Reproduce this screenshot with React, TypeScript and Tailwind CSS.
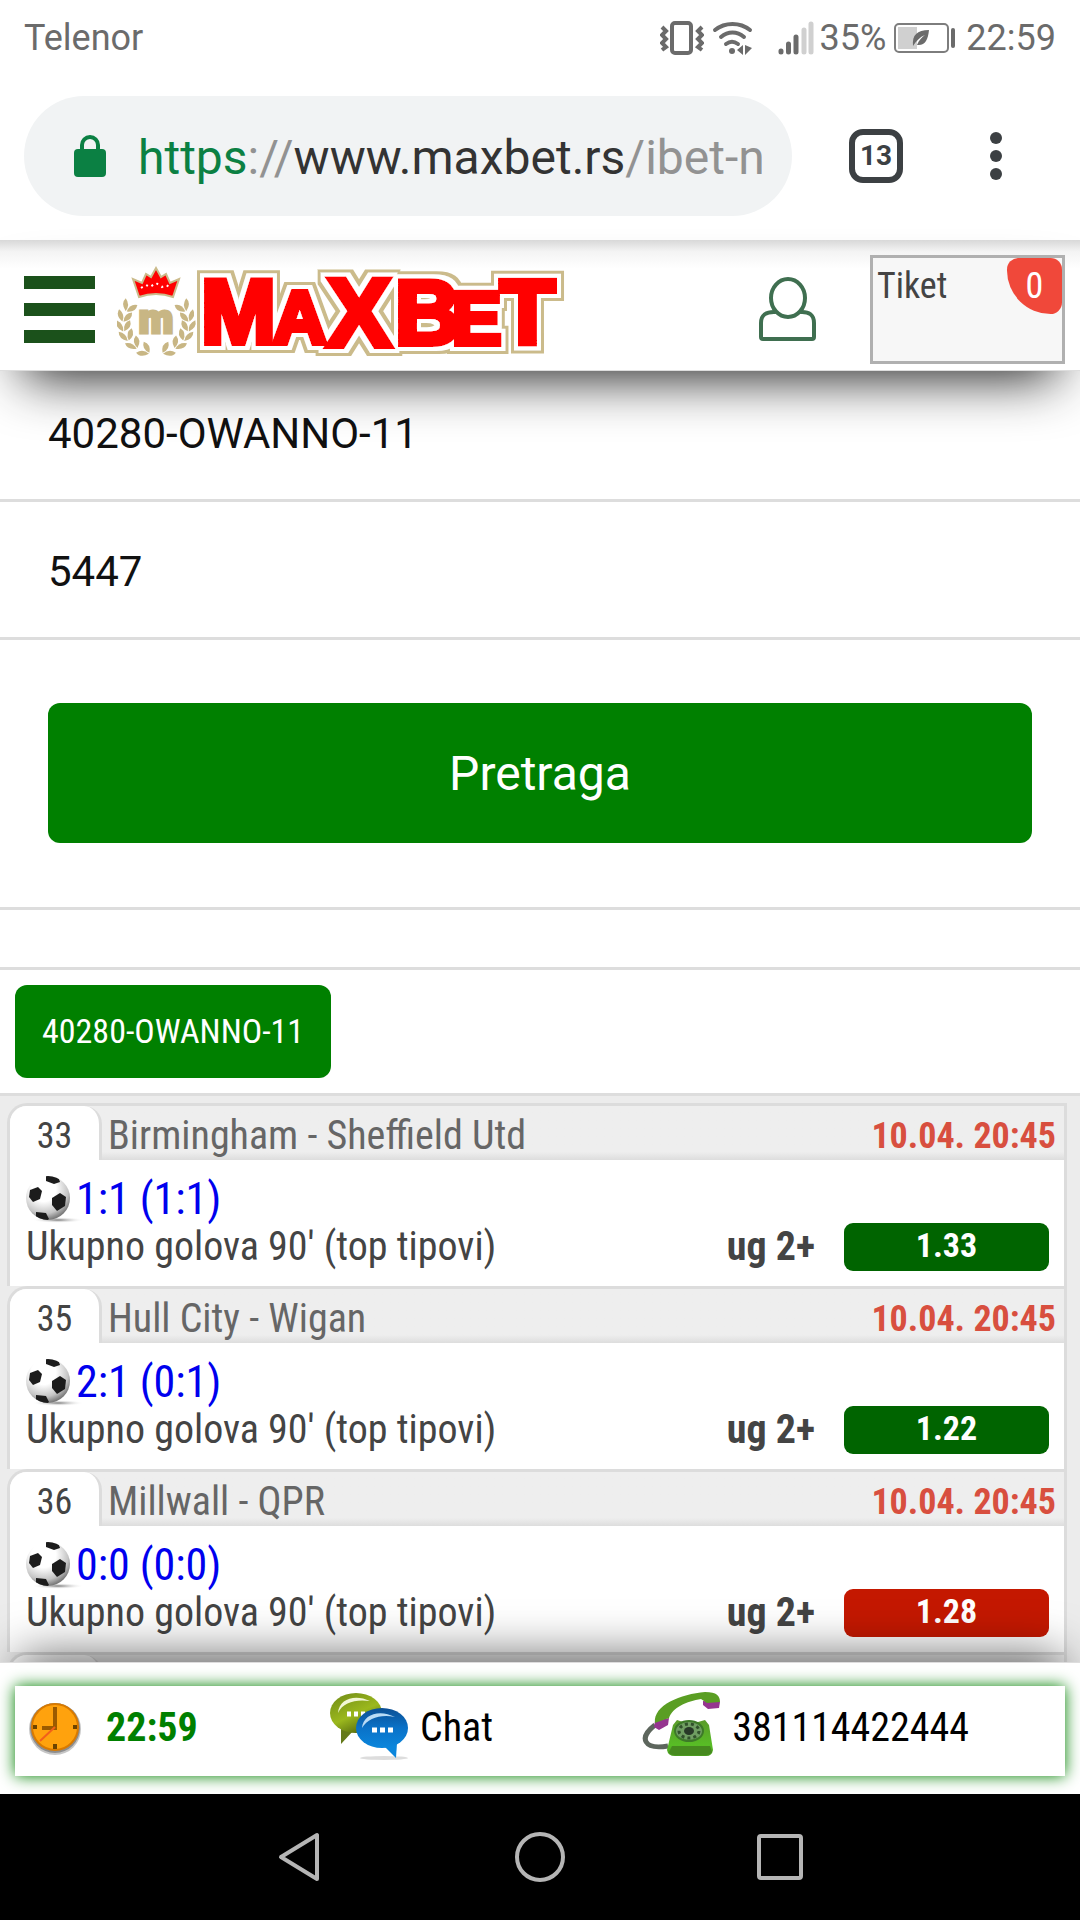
import { useState } from "react";

const matches = [
  { id: 33, teams: "Birmingham - Sheffield Utd", time: "10.04. 20:45", score: "1:1 (1:1)", odd: "1.33", won: true },
  { id: 35, teams: "Hull City - Wigan", time: "10.04. 20:45", score: "2:1 (0:1)", odd: "1.22", won: true },
  { id: 36, teams: "Millwall - QPR", time: "10.04. 20:45", score: "0:0 (0:0)", odd: "1.28", won: false },
];

const logoLetters = [
  { ch: "M", x: 84, y: 76, size: 90 },
  { ch: "A", x: 156, y: 76, size: 74 },
  { ch: "X", x: 210, y: 79, size: 96 },
  { ch: "B", x: 278, y: 77, size: 90 },
  { ch: "E", x: 335, y: 77, size: 74 },
  { ch: "T", x: 383, y: 77, size: 90 },
];

const laurelLeaves = [
  { x: 8, y: 38, r: 20 },
  { x: 3, y: 48, r: 5 },
  { x: 2, y: 58, r: -10 },
  { x: 5, y: 68, r: -25 },
  { x: 12, y: 77, r: -45 },
  { x: 23, y: 84, r: -65 },
];

const StatusBar = () => (
  <div className="flex h-[76px] items-center justify-between px-6 text-4xl text-[#6b6b6b]">
    <span>Telenor</span>
    <div className="flex items-center">
      <svg width="44" height="34" viewBox="0 0 44 34" fill="none" stroke="#6b6b6b" className="mr-2">
        <rect x="12" y="2" width="19" height="30" rx="3" strokeWidth="4" />
        <path d="M2 6l4 4-4 4 4 4-4 4 4 4-4 3M42 6l-4 4 4 4-4 4 4 4-4 4 4 3" strokeWidth="4" />
      </svg>
      <svg width="42" height="34" viewBox="0 0 42 34" fill="none" stroke="#6b6b6b" strokeWidth="4" strokeLinecap="round" className="mr-6">
        <path d="M3 9c10-8 25-8 35 0M9 16c7-6 16-6 23 0M14 23c4-3 8-3 12 0" />
        <circle cx="20" cy="30" r="3" fill="#6b6b6b" stroke="none" />
        <path d="M31 24v10l-6-5zM33 24v10l7-7z" fill="#6b6b6b" stroke="none" />
      </svg>
      <svg width="36" height="34" viewBox="0 0 36 34" strokeWidth="5" strokeLinecap="round" className="mr-1.5">
        <path d="M3 30v1M10.500 23v8M18 16v15" stroke="#6b6b6b" />
        <path d="M26 9v22M33 3v28" stroke="#d0d0d0" />
      </svg>
      <span className="mr-2">35%</span>
      <svg width="62" height="30" viewBox="0 0 62 30" fill="none" className="mr-2.5">
        <rect x="1" y="1" width="53" height="28" rx="4" stroke="#7d7d7d" strokeWidth="2" />
        <rect x="4" y="4" width="19" height="22" fill="#d0d0d0" />
        <path d="M19 23c-1-11 4-16 16-16-1 10-4 16-12 15 2-5 5-8 8-10-5 2-9 6-12 11z" fill="#6b6b6b" />
        <path d="M59 7v16" stroke="#6b6b6b" strokeWidth="4" strokeLinecap="round" />
      </svg>
      <span>22:59</span>
    </div>
  </div>
);

const AddressBar = () => (
  <div className="flex items-center px-6 pt-5 pb-6">
    <div className="flex h-[120px] min-w-0 flex-1 items-center rounded-full bg-[#f1f3f4] pr-[30px] pl-[50px]">
      <svg width="32" height="44" viewBox="0 0 32 44" className="mr-8 shrink-0">
        <path d="M8 16v-5a8 8 0 0 1 16 0v5" fill="none" stroke="#0b8043" strokeWidth="4" />
        <rect y="15" width="32" height="28" rx="4" fill="#0b8043" />
      </svg>
      <p className="overflow-hidden pt-1 text-5xl leading-[64px] whitespace-nowrap text-[#929292]">
        <span className="text-[#0b8043]">https</span>://<span className="text-[#333333]">www.maxbet.rs</span>/ibet-n
      </p>
    </div>
    <button className="ml-[57px] flex size-[54px] items-center justify-center rounded-[14px] border-6 border-[#3c4043] text-[28px] leading-none font-bold text-[#3c4043]">
      13
    </button>
    <button aria-label="Menu" className="mr-[54px] ml-[87px]">
      <svg width="12" height="48" viewBox="0 0 12 48" fill="#3c4043">
        <circle cx="6" cy="6" r="6" />
        <circle cx="6" cy="24" r="6" />
        <circle cx="6" cy="42" r="6" />
      </svg>
    </button>
  </div>
);

const Logo = () => (
  <svg width="452" height="102" viewBox="0 -4 452 102" role="img" aria-label="MaxBet">
    <defs>
      <filter id="logoOutline" filterUnits="userSpaceOnUse" x="70" y="-4" width="382" height="102">
        <feMorphology in="SourceAlpha" operator="dilate" radius="7" result="outer" />
        <feFlood floodColor="#cbbb8b" />
        <feComposite in2="outer" operator="in" result="gold" />
        <feMorphology in="SourceAlpha" operator="dilate" radius="4" result="inner" />
        <feFlood floodColor="#ffffff" />
        <feComposite in2="inner" operator="in" result="white" />
        <feMerge>
          <feMergeNode in="gold" />
          <feMergeNode in="white" />
          <feMergeNode in="SourceGraphic" />
        </feMerge>
      </filter>
    </defs>
    <path
      d="M22 30l-6-18 9 4 4-9 5 3 5-9 5 9 5-3 4 9 9-4-6 18q-17-6-34 0z"
      fill="#ff0000"
      stroke="#cbbb8b"
      strokeWidth="2"
    />
    <path d="M24 21l5-3 4 2 6-4 6 4 4-2 5 3" fill="none" stroke="#ffffff" strokeWidth="2" strokeDasharray="2 4" />
    {[false, true].map((flip) => (
      <g key={String(flip)} transform={flip ? "translate(78 0) scale(-1 1)" : undefined} fill="#c8b684">
        {laurelLeaves.map((leaf) => (
          <g key={leaf.y} transform={`translate(${leaf.x + 3} ${leaf.y}) rotate(${leaf.r}) scale(1.1)`}>
            <path d="M0 6q-7-5-4-11 6 4 4 11z" />
            <path d="M1 6q0-8 7-9 1 7-7 9z" />
          </g>
        ))}
      </g>
    ))}
    <text x="39" y="66" textAnchor="middle" fontSize="40" fontWeight="900" fill="#c8b684" stroke="#c8b684" strokeWidth="3" fontFamily="Roboto, sans-serif">
      m
    </text>
    <text
      fontFamily="'Liberation Sans', sans-serif"
      fontWeight="700"
      fill="#ff0000"
      stroke="#ff0000"
      strokeWidth="6"
      filter="url(#logoOutline)"
    >
      {logoLetters.map((l) => (
        <tspan key={l.ch} x={l.x} y={l.y} fontSize={l.size}>
          {l.ch}
        </tspan>
      ))}
    </text>
  </svg>
);

const Header = () => (
  <header className="relative z-10 flex h-[131px] items-center border-b border-[#dddddd] bg-linear-to-b from-[#d8d8d8] via-[#f4f4f4] via-9% to-white to-22% pt-2 pr-[15px] pl-6 shadow-[0_30px_54px_-24px_#000000e6]">
    <button aria-label="Meni" className="mr-[22px] flex flex-col gap-[14px]">
      <span className="h-[13px] w-[71px] bg-[#1b511b]" />
      <span className="h-[13px] w-[71px] bg-[#1b511b]" />
      <span className="h-[13px] w-[71px] bg-[#1b511b]" />
    </button>
    <a href="#" className="pt-2.5">
      <Logo />
    </a>
    <button aria-label="Nalog" className="mr-[54px] ml-auto">
      <svg width="57" height="64" viewBox="0 0 57 64" fill="none" stroke="#3f6f50" strokeWidth="4">
        <ellipse cx="29" cy="21" rx="17" ry="19" />
        <path d="M17 35Q2 34 2 46v14q0 2 2 2h49q2 0 2-2V46q0-12-14-11" />
      </svg>
    </button>
    <a
      href="#"
      className="flex h-[109px] w-[195px] items-start justify-between border-3 border-[#b0b0b0] bg-[#f7f7f7] pl-1 font-['Roboto_Condensed','Liberation_Sans_Narrow',sans-serif] text-4xl text-[#444444]"
    >
      <span className="pt-2">Tiket</span>
      <span className="flex h-14 w-[55px] items-center justify-center rounded-[12px] rounded-bl-[46px] bg-[#f0483a] text-white">0</span>
    </a>
  </header>
);

const Ball = () => (
  <svg width="56" height="48" viewBox="0 0 56 48" className="shrink-0">
    <defs>
      <radialGradient id="ball" cx="0.4" cy="0.3" r="0.7">
        <stop offset="0.4" stopColor="#ffffff" />
        <stop offset="0.8" stopColor="#c4c4c4" />
        <stop offset="1" stopColor="#7a7a7a" />
      </radialGradient>
      <radialGradient id="ballShadow">
        <stop offset="0" stopColor="#777777" />
        <stop offset="1" stopColor="#ffffff" stopOpacity="0" />
      </radialGradient>
      <clipPath id="ballClip">
        <circle cx="22" cy="23" r="22" />
      </clipPath>
    </defs>
    <ellipse cx="32" cy="45" rx="26" ry="3" fill="url(#ballShadow)" />
    <circle cx="22" cy="23" r="22" fill="url(#ball)" />
    <g fill="#1c1c1c" clipPath="url(#ballClip)">
      <path d="M20 0l12 1 2 6-6 2-8-3z" />
      <path d="M4 15l8-3 4 4-2 8-7 3-4-5z" />
      <path d="M26 23l8-5 6 4-1 9-8 5-5-6z" />
      <path d="M10 37l10 1 3 6-4 3-9-5z" />
    </g>
  </svg>
);

type Match = (typeof matches)[number];

const MatchCard = ({ match }: { match: Match }) => (
  <article className="overflow-hidden rounded-tl-[20px] border-3 border-b-0 border-[#dcdcdc] bg-white">
    <div className="flex h-[54px] items-end bg-linear-to-b from-[#eeeeee] from-85% to-[#dddddd]">
      <span className="flex h-full w-[92px] items-center justify-center rounded-tr-[18px] border-r-3 border-[#dcdcdc] bg-white pt-1.5 text-4xl text-[#444444]">
        {match.id}
      </span>
      <h2 className="ml-1.5 flex-1 text-[40px] leading-[48px] text-[#666666]">{match.teams}</h2>
      <time className="mr-2 text-4xl leading-[48px] font-bold text-[#d84f3f]">{match.time}</time>
    </div>
    <div className="pt-[15px] pr-[15px] pb-[15px] pl-4">
      <div className="flex h-12 items-center">
        <Ball />
        <span className="-ml-1.5 text-[44px] leading-[48px] text-[#0000ee]">{match.score}</span>
      </div>
      <div className="flex h-12 items-center text-[40px] leading-[48px] text-[#444444]">
        <span className="flex-1">Ukupno golova 90' (top tipovi)</span>
        <span className="mr-[29px] font-bold">ug 2+</span>
        <button
          className={`h-12 w-[205px] rounded-[9px] pb-1 text-[34px] leading-[44px] font-bold text-white ${match.won ? "bg-[#006400]" : "bg-[#c41800]"}`}
        >
          {match.odd}
        </button>
      </div>
    </div>
  </article>
);

const ClockIcon = () => (
  <svg width="54" height="54" viewBox="0 0 54 54">
    <circle cx="27" cy="28" r="26" fill="#c6c6c6" />
    <circle cx="27" cy="27" r="25" fill="#8d8d8d" />
    <circle cx="27" cy="26" r="23" fill="#ffa20d" stroke="#d97a00" strokeWidth="2" />
    <path d="M27 6v21H14" fill="none" stroke="#9b5a00" strokeWidth="4" />
    <path d="M27 26L12 40" stroke="#f2601a" strokeWidth="2" />
    <path d="M27 43v5M5 26h4M45 26h4" stroke="#6d4300" strokeWidth="4" />
  </svg>
);

const ChatIcon = () => (
  <svg width="78" height="72" viewBox="0 0 78 72">
    <defs>
      <linearGradient id="bubbleGreen" x1="0" y1="0" x2="0.6" y2="1">
        <stop offset="0" stopColor="#6f8a17" />
        <stop offset="0.6" stopColor="#9bb81d" />
        <stop offset="1" stopColor="#566b10" />
      </linearGradient>
      <linearGradient id="bubbleBlue" x1="0" y1="0" x2="0" y2="1">
        <stop offset="0" stopColor="#0c4f94" />
        <stop offset="0.5" stopColor="#0a72c8" />
        <stop offset="1" stopColor="#0b86dc" />
      </linearGradient>
    </defs>
    <ellipse cx="54" cy="66" rx="24" ry="2" fill="#dddddd" />
    <path d="M11 36v16l12-13z" fill="#64791a" />
    <ellipse cx="26" cy="21" rx="26" ry="20" fill="url(#bubbleGreen)" />
    <path d="M8 21C9 6 26 2 40 9 26 7 13 10 8 21z" fill="#f2f7d6" />
    <path d="M17 22h22" stroke="#ffffff" strokeWidth="5" strokeDasharray="4 3" />
    <path d="M54 54l12 12 1-15z" fill="#0b86dc" />
    <ellipse cx="52" cy="36" rx="26" ry="20" fill="url(#bubbleBlue)" />
    <path d="M32 36C33 22 50 17 65 25 51 22 38 26 32 36z" fill="#b9dbf5" />
    <path d="M42 38h21" stroke="#ffffff" strokeWidth="5" strokeDasharray="5 3" />
  </svg>
);

const PhoneIcon = () => (
  <svg width="78" height="72" viewBox="0 0 78 72">
    <defs>
      <linearGradient id="phoneBody" x1="0" y1="0" x2="0" y2="1">
        <stop offset="0" stopColor="#5b9b2b" />
        <stop offset="0.7" stopColor="#58bd25" />
        <stop offset="1" stopColor="#4a9a20" />
      </linearGradient>
    </defs>
    <path d="M13 33C-4 46 2 58 26 54" fill="none" stroke="#5d665d" strokeWidth="5" />
    <path d="M13 29l14-3-1 7-9 5-5-3z" fill="#95358f" />
    <path d="M61 9l17 1-1 6-11 1-5-4z" fill="#95358f" />
    <path d="M13 31C11 13 39 2 63 0c12 0 15 4 15 10l-13 1-6-4C45 9 30 16 27 26l-6 2z" fill="#5a9e23" />
    <path d="M31 33l4-5 6 2h15l7-2 4 5 4 25q-1 6-7 6H33q-7 0-8-6z" fill="url(#phoneBody)" />
    <path d="M30 54h38l2 6q-2 3-6 3H33q-5 0-6-3z" fill="#46891f" />
    <ellipse cx="47" cy="39" rx="14" ry="10" fill="#6f9d62" stroke="#3d7a28" strokeWidth="2" />
    <ellipse cx="47" cy="39" rx="10" ry="7" fill="none" stroke="#31512b" strokeWidth="3" strokeDasharray="3 3" />
    <ellipse cx="47" cy="39" rx="5" ry="4" fill="#283828" />
  </svg>
);

const SystemNav = () => (
  <nav className="relative z-10 flex h-[126px] items-center justify-center gap-[190px] bg-black">
    <button aria-label="Back">
      <svg width="50" height="50" viewBox="0 0 50 50" fill="none" stroke="#b5b5b5" strokeWidth="4" strokeLinejoin="round">
        <path d="M42 3v44L6 25z" />
      </svg>
    </button>
    <button aria-label="Home">
      <svg width="50" height="50" viewBox="0 0 50 50" fill="none" stroke="#b5b5b5" strokeWidth="4">
        <circle cx="25" cy="25" r="23" />
      </svg>
    </button>
    <button aria-label="Recent">
      <svg width="50" height="50" viewBox="0 0 50 50" fill="none" stroke="#b5b5b5" strokeWidth="4">
        <rect x="4" y="4" width="42" height="42" rx="2" />
      </svg>
    </button>
  </nav>
);

export default function App() {
  const [ticket, setTicket] = useState("40280-OWANNO-11");
  const [code, setCode] = useState("5447");

  return (
    <div className="flex h-screen flex-col overflow-hidden bg-white font-[Roboto,sans-serif]">
      <StatusBar />
      <AddressBar />
      <Header />

      <main className="min-h-0 flex-1 overflow-hidden">
        <form onSubmit={(e) => e.preventDefault()}>
          <input
            aria-label="Broj tiketa"
            value={ticket}
            onChange={(e) => setTicket(e.target.value)}
            className="block h-[131px] w-full border-b-3 border-[#dddddd] px-12 pb-1 text-[42px] text-[#111111] outline-none"
          />
          <input
            aria-label="Kod"
            value={code}
            onChange={(e) => setCode(e.target.value)}
            className="block h-[138px] w-full border-b-3 border-[#dddddd] px-12 pt-1 text-[42px] text-[#111111] outline-none"
          />
          <div className="border-b-3 border-[#dddddd] px-12 pt-[63px] pb-16">
            <button className="h-[140px] w-full rounded-xl bg-[#008000] pt-0.5 text-5xl text-white">Pretraga</button>
          </div>
        </form>

        <div className="mt-[57px] font-['Roboto_Condensed','Liberation_Sans_Narrow',sans-serif]">
          <div className="border-y-3 border-[#dddddd] p-[15px]">
            <button className="h-[93px] rounded-xl bg-[#008000] px-[27px] text-[34px] text-white">{ticket}</button>
          </div>
          <div className="bg-[#ececec] pt-[7px] pr-[13px] pl-[7px]">
            {matches.map((match) => (
              <MatchCard key={match.id} match={match} />
            ))}
            <div className="h-[57px] overflow-hidden rounded-tl-[20px] border-3 border-b-0 border-[#dcdcdc] bg-[#eeeeee]">
              <div className="h-full w-[92px] rounded-tr-[18px] border-r-3 border-[#dcdcdc] bg-white" />
            </div>
          </div>
        </div>
      </main>

      <footer className="relative z-10 border-t border-[#dddddd] bg-white px-[15px] pt-[23px] pb-[18px] font-['Roboto_Condensed','Liberation_Sans_Narrow',sans-serif] text-[40px] text-black shadow-[0_-24px_48px_-18px_#00000099]">
        <div className="grid h-[90px] grid-cols-[30fr_31fr_42fr] items-center bg-white pb-1.5 pl-[13px] shadow-[0_0_15px_#008000]">
          <div className="flex items-center gap-6 font-bold text-[#008000]">
            <ClockIcon />
            22:59
          </div>
          <a href="#" className="flex items-center gap-3">
            <ChatIcon />
            Chat
          </a>
          <a href="tel:381114422444" className="flex items-center gap-3">
            <PhoneIcon />
            381114422444
          </a>
        </div>
      </footer>
      <SystemNav />
    </div>
  );
}
